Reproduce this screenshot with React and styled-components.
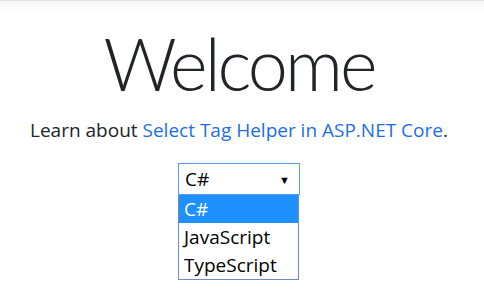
import React from "react";
import styled, { createGlobalStyle } from "styled-components";

const Global = createGlobalStyle`
  html, body { margin: 0; padding: 0; background: #fff; min-height: 100%; }
  html { height: 100%; }
  body { height: 100%; font-family: "Open Sans", "Noto Sans", sans-serif; color: #212529; }
  #root { min-height: 100%; }
`;

const Page = styled.div`
  min-height: 308px;
`;

const TopShade = styled.div`
  height: 13px;
  border-top: 1px solid #dadfe8;
  background: linear-gradient(#f6f6f7, #ffffff);
`;

const Main = styled.main`
  display: flex;
  flex-direction: column;
  align-items: center;
  text-align: center;
  padding-right: 6px;
`;

const Title = styled.h1`
  margin: 13px 0 0;
  font-family: "Lato", "Open Sans", sans-serif;
  font-size: 72px;
  line-height: 72px;
  font-weight: 300;
  letter-spacing: -3px;
  color: #212529;
`;

const Lead = styled.p`
  margin: 18px 0 0;
  font-size: 19px;
  line-height: 27px;
`;

const Link = styled.a`
  color: #1b6fe6;
  text-decoration: none;
`;

const SelectWrap = styled.div`
  position: relative;
  margin-top: 19px;
  width: 122px;
  text-align: left;
`;

const SelectBox = styled.div`
  box-sizing: border-box;
  height: 32px;
  border: 1px solid #5b9cf0;
  display: flex;
  align-items: center;
  justify-content: space-between;
  padding: 0 9px 0 6px;
  font-size: 19px;
  color: #000;
`;

const Arrow = styled.span`
  font-size: 11px;
  color: #000;
`;

const List = styled.ul`
  position: absolute;
  top: 100%;
  left: 0;
  box-sizing: border-box;
  width: 121px;
  margin: 0;
  padding: 0;
  list-style: none;
  border: 1px solid #6d8cc6;
  border-top: none;
  background: #fff;
`;

const Choice = styled.li`
  height: 28px;
  line-height: 28px;
  padding-left: 5px;
  font-size: 19px;
  background: ${(p) => (p.$active ? "#1e90ff" : "#fff")};
  color: ${(p) => (p.$active ? "#fff" : "#000")};
`;

const options = ["C#", "JavaScript", "TypeScript"];

export default function App() {
  return (
    <Page>
      <Global />
      <TopShade />
      <Main>
        <Title>Welcome</Title>
        <Lead>
          Learn about <Link href="#">Select Tag Helper in ASP.NET Core</Link>.
        </Lead>
        <SelectWrap>
          <SelectBox>
            <span>C#</span>
            <Arrow>▼</Arrow>
          </SelectBox>
          <List>
            {options.map((o, i) => (
              <Choice key={o} $active={i === 0}>
                {o}
              </Choice>
            ))}
          </List>
        </SelectWrap>
      </Main>
    </Page>
  );
}
